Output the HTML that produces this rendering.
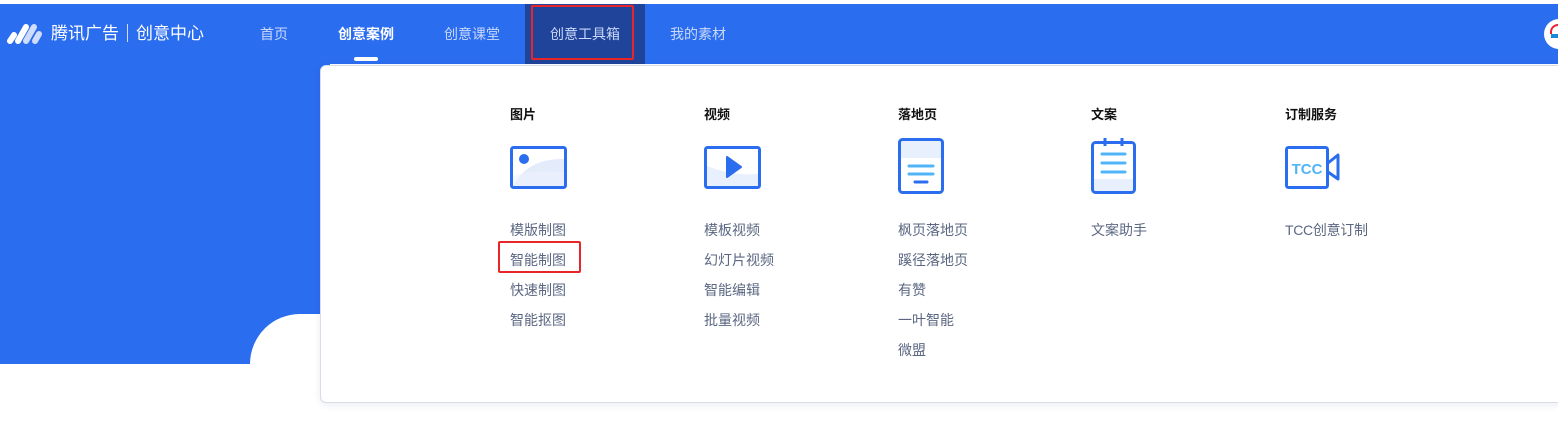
<!DOCTYPE html>
<html><head><meta charset="utf-8"><style>
*{margin:0;padding:0;box-sizing:border-box}
body{width:1558px;height:403px;overflow:hidden;background:#fff;position:relative;font-family:"Liberation Sans","Noto Sans CJK SC",sans-serif}
.top{position:absolute;left:0;top:4px;width:1558px;height:60px;background:#2b6def}
.left{position:absolute;left:0;top:64px;width:330px;height:300px;background:#2b6def}
.round{position:absolute;left:250px;top:314px;width:200px;height:120px;background:#fff;border-top-left-radius:50px}
.nav{position:absolute;top:4px;height:60px;line-height:60px;font-size:14px;color:#c9d8fb}
.act{position:absolute;left:525px;top:4px;width:120px;height:60px;background:#1f4499}
.red{position:absolute;border:2px solid #e8262a;border-radius:2px}
.dd{position:absolute;left:320px;top:65px;width:1250px;height:338px;background:#fff;border:1px solid #d8dce6;border-radius:6px;box-shadow:0 2px 8px rgba(0,30,90,.08)}
.h{position:absolute;top:104px;font-size:13px;font-weight:bold;color:#111}
.l{position:absolute;font-size:14px;color:#5b6782}
svg{position:absolute}
</style></head><body>
<div class="top"></div>
<div class="left"></div>
<div class="round"></div>
<svg style="left:6px;top:22px" width="38" height="24" viewBox="0 0 38 24"><g stroke="#fff" stroke-width="6" stroke-linecap="round"><line x1="4" y1="19" x2="8" y2="13"/><line x1="12" y1="19" x2="20" y2="5"/></g><g stroke="#cfdcfb" stroke-width="6" stroke-linecap="round"><line x1="20" y1="19" x2="28" y2="5"/><line x1="29" y1="19" x2="33" y2="12"/></g></svg>
<div class="nav" style="left:51px;color:#fff;font-size:17px">腾讯广告<span style="display:inline-block;width:1px;height:18px;background:#cfdcfb;margin:0 8px;vertical-align:-3px"></span>创意中心</div>
<div class="nav" style="left:260px">首页</div>
<div class="nav" style="left:338px;color:#fff;font-weight:bold">创意案例</div>
<div style="position:absolute;left:354px;top:57px;width:24px;height:4px;border-radius:2px;background:#fff"></div>
<div class="nav" style="left:444px">创意课堂</div>
<div class="act"></div>
<div class="nav" style="left:550px">创意工具箱</div>
<div class="red" style="left:531px;top:5px;width:103px;height:55px"></div>
<div class="nav" style="left:670px">我的素材</div>
<div style="position:absolute;left:1544px;top:19px;width:30px;height:30px;border-radius:50%;background:#fff"></div>
<div style="position:absolute;left:1550px;top:24px;width:10px;height:10px;border-top:2px solid #e23;border-left:2px solid #e23;border-radius:8px 0 0 0"></div>
<div style="position:absolute;left:1551px;top:34px;width:8px;height:4px;background:#1a8ad8"></div>
<div class="dd"></div>
<div class="h" style="left:510px">图片</div>
<div class="h" style="left:704px">视频</div>
<div class="h" style="left:898px">落地页</div>
<div class="h" style="left:1091px">文案</div>
<div class="h" style="left:1285px">订制服务</div>
<svg style="left:510px;top:146px" width="57" height="43" viewBox="0 0 57 43"><path d="M3 40 Q18 12 54 13 V40Z" fill="#e4ecfc"/><path d="M3 30 Q20 24 54 26 V40 H3Z" fill="#edf2fd" opacity=".6"/><rect x="1.5" y="1.5" width="54" height="40" rx="2" fill="none" stroke="#2b6def" stroke-width="3"/><circle cx="14" cy="13" r="5" fill="#2b6def"/></svg>
<svg style="left:704px;top:146px" width="57" height="43" viewBox="0 0 57 43"><path d="M3 20 Q28 30 54 28 V40 H3Z" fill="#e8effd"/><rect x="1.5" y="1.5" width="54" height="40" rx="2" fill="none" stroke="#2b6def" stroke-width="3"/><path d="M23 11 L37 21 L23 31Z" fill="#2b6def" stroke="#2b6def" stroke-width="2" stroke-linejoin="round"/></svg>
<svg style="left:898px;top:138px" width="46" height="56" viewBox="0 0 46 56"><rect x="2" y="2" width="42" height="18" fill="#e8effd"/><rect x="1.5" y="1.5" width="43" height="53" rx="3" fill="none" stroke="#2b6def" stroke-width="3"/><g stroke-linecap="round" stroke-width="3"><line x1="11" y1="28" x2="35" y2="28" stroke="#4fb4f8"/><line x1="11" y1="36" x2="35" y2="36" stroke="#4fb4f8"/><line x1="17" y1="44" x2="29" y2="44" stroke="#2b6def"/></g></svg>
<svg style="left:1091px;top:138px" width="46" height="56" viewBox="0 0 46 56"><rect x="2" y="41" width="42" height="13" fill="#e8effd"/><rect x="1.5" y="4.5" width="42" height="50" rx="3" fill="none" stroke="#2b6def" stroke-width="3"/><g stroke="#2b6def" stroke-width="3"><line x1="14" y1="0" x2="14" y2="8"/><line x1="31" y1="0" x2="31" y2="8"/></g><g stroke="#4fb4f8" stroke-width="3" stroke-linecap="round"><line x1="11" y1="16" x2="34" y2="16"/><line x1="11" y1="25" x2="34" y2="25"/><line x1="11" y1="34" x2="34" y2="34"/></g></svg>
<svg style="left:1285px;top:146px" width="57" height="43" viewBox="0 0 57 43"><rect x="1.5" y="1.5" width="41" height="40" rx="2" fill="none" stroke="#2b6def" stroke-width="3"/><path d="M43 17 L53 9 V33 L43 26" fill="none" stroke="#2b6def" stroke-width="3" stroke-linejoin="round"/><text x="22" y="28" text-anchor="middle" font-family="Liberation Sans" font-weight="bold" font-size="15" fill="#4fb4f8">TCC</text></svg>
<div class="l" style="left:510px;top:220px">模版制图</div>
<div class="l" style="left:510px;top:250px">智能制图</div>
<div class="red" style="left:498px;top:241px;width:83px;height:32px"></div>
<div class="l" style="left:510px;top:280px">快速制图</div>
<div class="l" style="left:510px;top:310px">智能抠图</div>
<div class="l" style="left:704px;top:220px">模板视频</div>
<div class="l" style="left:704px;top:250px">幻灯片视频</div>
<div class="l" style="left:704px;top:280px">智能编辑</div>
<div class="l" style="left:704px;top:310px">批量视频</div>
<div class="l" style="left:898px;top:220px">枫页落地页</div>
<div class="l" style="left:898px;top:250px">蹊径落地页</div>
<div class="l" style="left:898px;top:280px">有赞</div>
<div class="l" style="left:898px;top:310px">一叶智能</div>
<div class="l" style="left:898px;top:340px">微盟</div>
<div class="l" style="left:1091px;top:220px">文案助手</div>
<div class="l" style="left:1285px;top:220px;letter-spacing:-0.3px">TCC创意订制</div>
</body></html>
